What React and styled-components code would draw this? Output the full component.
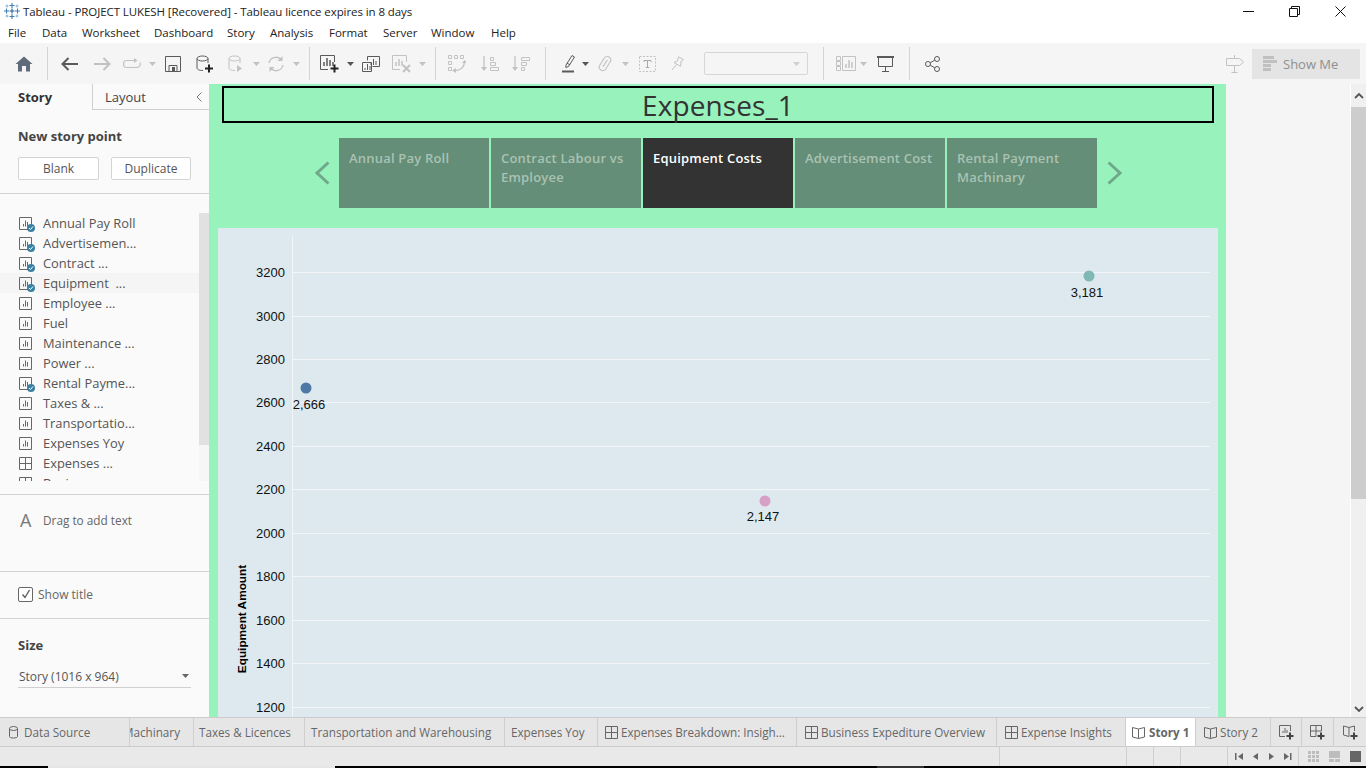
import React from "react";
import styled, { createGlobalStyle } from "styled-components";

const Global = createGlobalStyle`
  html, body { margin: 0; padding: 0; height: 100%; overflow: hidden; background: #fff; }
  #root { height: 100%; }
  * { box-sizing: border-box; }
`;
const UI = `"Open Sans", "Noto Sans", sans-serif`;

const Shell = styled.div`
  width: 1366px; height: 768px; display: flex; flex-direction: column; overflow: hidden;
  font-family: ${UI}; color: #555;
`;
const TitleBar = styled.div`
  height: 22px; flex: none; display: flex; align-items: center; padding-left: 3px; background: #fff;
`;
const WindowTitle = styled.span`
  margin-left: 2px; font-size: 11.5px; color: #222; white-space: nowrap; letter-spacing: -0.08px;
`;
const WinControls = styled.div`
  margin-left: auto; display: flex; align-items: center; padding-right: 3px;
`;
const WinBtn = styled.div`
  width: 46px; height: 22px; display: flex; align-items: center; justify-content: center;
`;
const MenuBar = styled.div`
  height: 21px; flex: none; display: flex; align-items: center; padding-left: 8px; background: #fff;
`;
const MenuItem = styled.span`
  width: ${p => p.$w}px; font-size: 11.5px; color: #222; white-space: nowrap;
`;
const Toolbar = styled.div`
  height: 41px; flex: none; display: flex; align-items: center; padding-left: 8px; padding-right: 6px;
  background: #f5f5f5;
`;
const Slot = styled.div`
  width: ${p => p.$w}px; flex: none; height: 30px; display: flex; align-items: center; justify-content: center;
`;
const Sep = styled.div`
  width: ${p => p.$w}px; flex: none; height: 33px; display: flex; justify-content: center;
  &::before { content: ""; width: 1px; height: 100%; background: #d4d4d4; }
`;
const Combo = styled.div`
  width: 104px; height: 23px; margin-left: 11px; flex: none; border: 1px solid #d6d6d6; border-radius: 2px;
  display: flex; align-items: center; justify-content: flex-end; padding-right: 3px;
`;
const RightTools = styled.div`
  margin-left: auto; display: flex; align-items: center; gap: 3px;
`;
const ShowMe = styled.div`
  width: 108px; height: 30px; background: #e4e4e4; display: flex; align-items: center; gap: 6px; padding-left: 11px;
  font-size: 13px; color: #8f8f8f;
`;
const Main = styled.div`
  height: 633px; flex: none; display: flex; min-height: 0;
`;
const Sidebar = styled.aside`
  width: 209px; flex: none; display: flex; flex-direction: column; background: #fafafa;
`;
const SideTabs = styled.div`
  height: 26px; flex: none; display: flex;
`;
const SideTabActive = styled.div`
  width: 92px; padding-left: 18px; font-size: 13px; font-weight: 700; color: #333; line-height: 26px;
`;
const SideTab = styled.div`
  flex: 1; display: flex; align-items: center; justify-content: space-between; padding: 0 7px 0 12px;
  font-size: 13px; color: #444; border-left: 1px solid #cfcfcf; border-bottom: 1px solid #cfcfcf;
`;
const NewPoint = styled.section`
  height: 84px; flex: none; padding: 17px 18px 0; border-bottom: 1px solid #d2d2d2;
`;
const SectionLabel = styled.div`
  font-size: 13px; font-weight: 700; color: #444; line-height: 18px;
`;
const BtnRow = styled.div`
  display: flex; gap: 12px; margin-top: 12px;
`;
const Btn = styled.div`
  width: ${p => p.$w}px; height: 23px; border: 1px solid #d4d4d4; border-radius: 2px; background: #fff;
  display: flex; align-items: center; justify-content: center; font-size: 12px; color: #555;
`;
const ListSection = styled.section`
  height: 301px; flex: none; padding: 19px 0 13px; border-bottom: 1px solid #d2d2d2;
`;
const ListWrap = styled.div`
  height: 268px; display: flex; overflow: hidden;
`;
const List = styled.div`
  flex: 1; min-width: 0;
`;
const Row = styled.div`
  height: 20px; display: flex; align-items: center; padding-left: 19px; gap: 11px; font-size: 12.9px; color: #555;
  white-space: pre; background: ${p => (p.$active ? "#f5f5f5" : "transparent")};
`;
const ListScroll = styled.div`
  width: 10px; flex: none; background: #f6f6f6; display: flex; flex-direction: column;
  &::before { content: ""; height: 232px; background: #e1e1e1; }
`;
const TextSection = styled.section`
  height: 77px; flex: none; padding: 15px 0 0 20px; display: flex; align-items: flex-start; gap: 12px;
  border-bottom: 1px solid #d2d2d2;
`;
const BigA = styled.span`
  font-size: 18px; line-height: 20px; color: #777; width: 11px;
`;
const Hint = styled.span`
  font-size: 11.8px; line-height: 20px; color: #666;
`;
const TitleSection = styled.section`
  height: 47px; flex: none; padding: 0 0 2px 18px; display: flex; align-items: center; gap: 5px;
  border-bottom: 1px solid #d2d2d2; font-size: 12px; color: #666;
`;
const CheckBox = styled.div`
  width: 15px; height: 15px; border: 1px solid #666; border-radius: 2px; background: #fff;
  display: flex; align-items: center; justify-content: center;
`;
const SizeSection = styled.section`
  flex: 1; padding: 17px 18px 0;
`;
const SizeSelect = styled.div`
  margin-top: 11px; height: 23px; border-bottom: 1px solid #cfcfcf; padding: 0 2px 0 1px;
  display: flex; align-items: center; justify-content: space-between; font-size: 12px; color: #555;
`;
const Canvas = styled.main`
  width: 1017px; flex: none; background: #98f2bc; padding-top: 2px; display: flex; flex-direction: column; min-height: 0;
`;
const StoryTitle = styled.h1`
  margin: 0 12px 0 13px; height: 37px; flex: none; border: 2px solid #000;
  display: flex; align-items: center; justify-content: center;
  font-family: ${UI}; font-weight: 400; font-size: 28px; color: #333; letter-spacing: 0.1px;
`;
const StoryNav = styled.nav`
  margin: 15px 0 0 95px; height: 70px; flex: none; display: flex;
`;
const Chevron = styled.div`
  width: 35px; flex: none; display: flex; align-items: center; justify-content: center;
`;
const Points = styled.div`
  display: flex; gap: 2px;
`;
const Point = styled.div`
  width: 150px; padding: 11px 10px; font-size: 13px; line-height: 19px; font-weight: 600; letter-spacing: 0.2px;
  background: ${p => (p.$active ? "#333333" : "#648e77")};
  color: ${p => (p.$active ? "#ffffff" : "#a9c2b3")};
`;
const ChartPanel = styled.div`
  margin: 20px 0 0 9px; width: 1000px; flex: 1; min-height: 0; background: #dde9ef; overflow: hidden;
`;
const ChartSvg = styled.svg`
  display: block; width: 1000px; height: 489px;
`;
const Gutter = styled.div`
  flex: 1; background: #f5f5f5;
`;
const VScroll = styled.div`
  width: 16px; flex: none; background: #f0f0f0; display: flex; flex-direction: column; align-items: center;
  border-left: 1px solid #fff;
`;
const ScrollEnd = styled.div`
  height: ${p => p.$h}px; width: 100%; flex: none; display: flex; align-items: center; justify-content: center;
`;
const Thumb = styled.div`
  width: 100%; height: 392px; flex: none; background: #cdcdcd;
`;
const ScrollSpace = styled.div`
  flex: 1;
`;
const TabBar = styled.div`
  height: 30px; flex: none; display: flex; background: #e6e6e6;
  border-top: 1px solid #cccccc; border-bottom: 1px solid #cccccc;
`;
const Tab = styled.div`
  width: ${p => p.$w}px; flex: none; overflow: hidden; display: flex; align-items: center;
  justify-content: ${p => (p.$end ? "flex-end" : "flex-start")};
  gap: ${p => p.$gap || 3}px; padding: ${p => (p.$end ? "0 13px 0 0" : `0 0 0 ${p.$pl}px`)};
  border-right: 1px solid #cfcfcf; white-space: nowrap; font-size: 11.7px; color: #666;
  background: ${p => (p.$active ? "#fff" : "transparent")};
  font-weight: ${p => (p.$active ? 700 : 400)};
`;
const AddTab = styled.div`
  width: ${p => p.$w}px; flex: none; display: flex; align-items: center; justify-content: center;
  border-right: 1px solid #cfcfcf;
`;
const StatusBar = styled.div`
  height: 19px; flex: none; display: flex; background: #e9e9e9;
`;
const StatusCell = styled.div`
  width: ${p => p.$w}px; flex: none; height: 100%; border-right: 1px solid #cfcfcf;
  display: flex; align-items: center; justify-content: space-around; padding: 0 ${p => p.$pad || 0}px;
`;
const StatusViews = styled.div`
  flex: 1; display: flex; align-items: center; padding-left: 9px; gap: 10px;
`;
const TaskStrip = styled.div`
  height: 2px; flex: none; display: flex; background: #000;
`;
const StripPart = styled.div`
  width: ${p => p.$w}px; flex: none; background: ${p => p.$c};
`;

const on = "#5a5a5a", off = "#c2c2c2";
const S = ({ w = 20, h = 20, children, vb }) => (
  <svg width={w} height={h} viewBox={vb || `0 0 ${w} ${h}`} fill="none" style={{ flex: "none", display: "block" }}>{children}</svg>
);

const Logo = () => (
  <S w={18} h={18}>
    <g stroke="#3f7fb5" strokeWidth="1.1">
      <path d="M9 1v5M6.5 3.5h5M9 12v5M6.5 14.5h5M1 9h5M3.5 6.5v5M12 9h5M14.5 6.5v5" />
      <path d="M9 6.5v5M6.5 9h5" stroke="#1f5d96" />
      <path d="M4 2.5v3M2.5 4h3M14 2.5v3M12.5 4h3M4 12.5v3M2.5 14h3M14 12.5v3M12.5 14h3" stroke="#8cb2d2" />
    </g>
  </S>
);
const Home = () => (
  <S w={18} h={16}><path d="M9 .5 17.5 8H15v7.5h-4V10H7v5.5H3V8H.5z" fill="#5f6b78" /></S>
);
const Arrow = ({ c, flip }) => (
  <S w={18} h={14}>
    <g transform={flip ? "translate(18 0) scale(-1 1)" : undefined} stroke={c} strokeWidth="2" >
      <path d="M1.5 7H17M7.5 1 1.5 7l6 6" />
    </g>
  </S>
);
const Redo = () => (
  <S w={20} h={12}><path d="M13 2.5H5a3.5 3.5 0 0 0 0 7h10a3.5 3.5 0 0 0 3-5" stroke={off} strokeWidth="1.2" /><path d="M12 0l3.5 2.5L12 5z" fill={off} /></S>
);
const Drop = ({ c = off }) => <S w={7} h={4}><path d="M0 0h7L3.5 4z" fill={c} /></S>;
const Save = () => (
  <S w={16} h={16}><path d="M.5.5h15v15H.5z" stroke={on} /><path d="M4 15V9.5h8V15" stroke={on} /><path d="M7 11h3v4H7z" fill={on} /></S>
);
const Plus = ({ x, y, c = "#222", s = 4 }) => (
  <path d={`M${x - s} ${y}h${s * 2}M${x} ${y - s}v${s * 2}`} stroke={c} strokeWidth="2" />
);
const Cyl = ({ c, children }) => (
  <S w={18} h={18}>
    <ellipse cx="6.5" cy="3.5" rx="5.5" ry="2.5" stroke={c} />
    <path d="M1 3.5V13c0 1.5 2.5 2.5 6 2.5M12 3.5V8" stroke={c} />
    {children}
  </S>
);
const Reload = () => (
  <S w={18} h={18}>
    <path d="M2 8a7 7 0 0 1 12-3.5M16 10a7 7 0 0 1-12 3.5" stroke={off} strokeWidth="1.3" />
    <path d="M15.5 1v5h-5zM2.500 17v-5h5z" fill={off} />
  </S>
);
const Bars = ({ c, x = 0, y = 0 }) => (
  <path d={`M${x + 4} ${y + 9}V${y + 7}M${x + 6.500} ${y + 9}V${y + 3}M${x + 9} ${y + 9}V${y + 5}`} stroke={c} />
);
const NewSheet = () => (
  <S w={20} h={20}>
    <path d="M14.500 8V1.500H.5v14H8" stroke={on} />
    <path d="M4 12V8M7 12V4M10 12V6M13 12V8" stroke={on} strokeWidth="1.5" />
    <Plus x={14.500} y={14.500} />
  </S>
);
const DupSheet = () => (
  <S w={18} h={16}>
    <path d="M5.500 4.500V.5h12v10h-7" stroke={on} />
    <path d="M.5 6.500h9v9h-9z" stroke={on} fill="#f5f5f5" />
    <Bars c={on} x={5} y={0} />
    <Bars c={on} x={-1} y={5} />
  </S>
);
const ClearSheet = () => (
  <S w={20} h={18}>
    <path d="M14.500 7V.5H.5v14H8" stroke={off} />
    <path d="M4 11V7M7 11V4M10 11V6" stroke={off} strokeWidth="1.5" />
    <path d="M11 10l7 7M18 10l-7 7" stroke={off} strokeWidth="2" />
  </S>
);
const Swap = () => (
  <S w={18} h={18} >
    <g stroke={off}>
      <path d="M.5.5h3v3h-3zM6.500.5h3v3h-3zM12.500.5h3v3h-3zM.5 6.500h3v3h-3zM.5 12.500h3v3h-3z" />
      <path d="M16.500 7c0 5-4 8.500-9.500 8.500" strokeWidth="1.300" />
    </g>
    <path d="M8 13v5l-4-2.500zM14 8h5l-2.500-3z" fill={off} />
  </S>
);
const Sort = ({ desc }) => (
  <S w={18} h={16}>
    <path d="M3 0v12" stroke={off} strokeWidth="1.300" />
    <path d="M0 11h6l-3 4z" fill={off} />
    {desc
      ? <path d="M9.500 1.500h8v3h-8zM9.500 6.500h5v3h-5zM9.500 11.500h3v3h-3z" stroke={off} />
      : <path d="M9.500 1.500h3v3h-3zM9.500 6.500h5v3h-5zM9.500 11.500h8v3h-8z" stroke={off} />}
  </S>
);
const Pen = () => (
  <S w={13} h={19}>
    <path d="M4 11 10 1.500l2.500 1.500-6 9.500-2.700 1z" stroke={on} />
    <path d="M5 9l3 2" stroke={on} />
    <path d="M0 17.500h12" stroke={on} strokeWidth="2" />
  </S>
);
const Clip = () => (
  <S w={14} h={17}>
    <g transform="rotate(32 7 8.500)" stroke={off} strokeWidth="1.100">
      <rect x="3.500" y=".8" width="7" height="15.400" rx="3.500" />
      <path d="M7 4v8.500" />
    </g>
  </S>
);
const TextBox = () => (
  <S w={17} h={16}>
    <path d="M.5.5h16v15H.5z" stroke={off} strokeDasharray="2 1.500" />
    <path d="M5 4.500h7M8.500 4.500v7M6.800 11.500h3.400M5 4.500V6M12 4.500V6" stroke="#a8a8a8" />
  </S>
);
const Pin = () => (
  <S w={13} h={15} >
    <path d="M7.500.8l5 2.800-2.400 1.400-.6 5.300L3 6.500l3.500-1.500zM5.500 8.500 1 14" stroke={off} />
  </S>
);
const LabelsIcon = () => (
  <S w={20} h={15}>
    <path d="M.5.5h4v4h-4zM.5 5.500h4v4h-4zM.5 10.500h4v4h-4zM6.500.5h13v14h-13z" stroke={off} />
    <path d="M10 12V8M13 12V4M16 12V6" stroke={off} strokeWidth="1.500" />
  </S>
);
const Present = () => (
  <S w={17} h={16}>
    <path d="M0 1h17" stroke={on} strokeWidth="2" />
    <path d="M1.500 1v9.500h14V1M8.500 10.500v4.500M5 15.500h7" stroke={on} />
  </S>
);
const Share = () => (
  <S w={15} h={16}>
    <circle cx="3" cy="8" r="2.500" stroke={on} />
    <circle cx="12" cy="3" r="2.500" stroke={on} />
    <circle cx="12" cy="13" r="2.500" stroke={on} />
    <path d="M5.200 6.800 9.800 4.200M5.200 9.200l4.600 2.600" stroke={on} />
  </S>
);
const Signpost = () => (
  <S w={18} h={18}>
    <path d="M8.500 0v3M.5 3.500h13l4 3.500-4 3.500H.5zM8.500 10.500v7M5.500 17.500h6" stroke={off} />
  </S>
);
const ShowMeIcon = () => (
  <S w={14} h={15}><path d="M0 0h11v3H0zM0 4h14v3H0zM0 8h8v3H0zM0 12h8v3H0z" fill="#c0c0c0" /></S>
);
const SheetGlyph = () => (
  <S w={13} h={15} vb="0 0 13 15">
    <path d="M.5 1.500h12v12H.5z" stroke="#666" fill="none" />
    <path d="M4.500 10.500V8M6.500 10.500V4.500M8.500 10.500V6" stroke="#666" />
  </S>
);
const Badge = styled.span`
  position: absolute; right: -3px; bottom: -1px; width: 8px; height: 8px; border-radius: 50%; background: #3a80a3;
  display: flex; align-items: center; justify-content: center;
`;
const IconBox = styled.span`
  position: relative; width: 13px; height: 15px; flex: none; display: block;
`;
const Sheet = ({ check }) => (
  <IconBox>
    <SheetGlyph />
    {check && <Badge><S w={6} h={6}><path d="M1 3l1.500 1.500L5 1.500" stroke="#fff" /></S></Badge>}
  </IconBox>
);
const GridGlyph = ({ c = "#666" }) => (
  <S w={13} h={13}><path d="M.5.5h12v12H.5zM6.500.5v12M.5 6.500h12" stroke={c} /></S>
);
const Book = ({ c = "#666" }) => (
  <S w={13} h={13}>
    <path d="M.5 1.500 6.500 3l6-1.500V11l-6 1.500L.5 11zM6.500 3v9.500" stroke={c} />
  </S>
);
const TabCyl = () => (
  <S w={9} h={13}>
    <ellipse cx="4.500" cy="2.500" rx="4" ry="2" stroke="#666" />
    <path d="M.5 2.500V10.500c0 2 8 2 8 0V2.500" stroke="#666" />
  </S>
);
const AddIcon = ({ kind }) => (
  <S w={15} h={15}>
    {kind === "sheet" && <><path d="M11.500 6V.5H.5v11H6" stroke="#666" /><path d="M4 8V6M6 8V3M8 8V5" stroke="#666" /></>}
    {kind === "grid" && <path d="M11.500 6V.5H.5v11H6M6 .5v11M.5 6H11.500" stroke="#666" />}
    {kind === "story" && <path d="M.5 1 6 2.500 11.500 1v5M6 2.500V11.500L.5 10V1" stroke="#666" />}
    <Plus x={11} y={11} c="#444" s={3.500} />
  </S>
);
const Nav = ({ d }) => <S w={9} h={9}><path d={d} fill="#666" /></S>;

const Slotted = ({ w, children }) => <Slot $w={w}>{children}</Slot>;

const sheets = [
  ["Annual Pay Roll", 1], ["Advertisemen...", 1], ["Contract ...", 1], ["Equipment  ...", 1, 1], ["Employee ..."],
  ["Fuel"], ["Maintenance ..."], ["Power ..."], ["Rental Payme...", 1], ["Taxes & ..."], ["Transportatio..."],
  ["Expenses Yoy"], ["Expenses ...", 0, 0, 1], ["Business ...", 0, 0, 1],
];
const menus = [["File", 34], ["Data", 40], ["Worksheet", 72], ["Dashboard", 73], ["Story", 43], ["Analysis", 59], ["Format", 54], ["Server", 48], ["Window", 60], ["Help", 40]];
const ticks = [[3200, 49], [3000, 93], [2800, 136], [2600, 179], [2400, 223], [2200, 266], [2000, 310], [1800, 353], [1600, 397], [1400, 440], [1200, 484]];

const Chart = () => (
  <ChartSvg viewBox="0 0 1000 489">
    <path d="M74.500 8V489" stroke="#f3f6f8" />
    {ticks.map(([t, base]) => (
      <g key={t}>
        <path d={`M74 ${base - 4.500}H992`} stroke="#f3f6f8" />
        <text x="67" y={base} textAnchor="end" fontFamily="Liberation Sans" fontSize="13" fill="#111">{t}</text>
      </g>
    ))}
    <circle cx="88" cy="160" r="5.500" fill="#4e79a7" />
    <circle cx="547" cy="273" r="5.500" fill="#d7a1c5" />
    <circle cx="871" cy="48" r="5.500" fill="#7fb8b4" />
    <g fontFamily="Liberation Sans" fontSize="13" fill="#111" textAnchor="middle">
      <text x="91" y="181">2,666</text>
      <text x="545" y="293">2,147</text>
      <text x="869" y="69">3,181</text>
    </g>
    <text transform="translate(27.500 391) rotate(-90)" textAnchor="middle" fontFamily="Liberation Sans" fontWeight="700" fontSize="11.800" fill="#000">Equipment Amount</text>
  </ChartSvg>
);

export default function App() {
  return (
    <Shell>
      <Global />
      <TitleBar>
        <Logo />
        <WindowTitle>Tableau - PROJECT LUKESH [Recovered] - Tableau licence expires in 8 days</WindowTitle>
        <WinControls>
          <WinBtn><S w={11} h={11}><path d="M0 5.500h11" stroke="#111" /></S></WinBtn>
          <WinBtn><S w={11} h={11}><path d="M.5 2.500h8v8h-8zM2.500 2.500V.5h8v8h-2" stroke="#111" /></S></WinBtn>
          <WinBtn><S w={11} h={11}><path d="M.5.5l10 10M10.500.5l-10 10" stroke="#111" /></S></WinBtn>
        </WinControls>
      </TitleBar>
      <MenuBar>
        {menus.map(([m, w]) => <MenuItem key={m} $w={w}>{m}</MenuItem>)}
      </MenuBar>
      <Toolbar>
        <Slotted w={32}><Home /></Slotted>
        <Sep $w={15} />
        <Slotted w={30}><Arrow c="#5a5a5a" /></Slotted>
        <Slotted w={34}><Arrow c={off} flip /></Slotted>
        <Slotted w={26}><Redo /></Slotted>
        <Slotted w={14}><Drop /></Slotted>
        <Slotted w={28}><Save /></Slotted>
        <Slotted w={36}><Cyl c={on}><Plus x={13} y={13.500} /></Cyl></Slotted>
        <Slotted w={28}><Cyl c={off}><path d="M9 10v7l5-3.500z" fill={off} /></Cyl></Slotted>
        <Slotted w={10}><Drop /></Slotted>
        <Slotted w={30}><Reload /></Slotted>
        <Slotted w={10}><Drop /></Slotted>
        <Sep $w={16} />
        <Slotted w={26}><NewSheet /></Slotted>
        <Slotted w={14}><Drop c="#555" /></Slotted>
        <Slotted w={28}><DupSheet /></Slotted>
        <Slotted w={34}><ClearSheet /></Slotted>
        <Slotted w={6}><Drop /></Slotted>
        <Sep $w={20} />
        <Slotted w={24}><Swap /></Slotted>
        <Slotted w={42}><Sort /></Slotted>
        <Slotted w={20}><Sort desc /></Slotted>
        <Sep $w={28} />
        <Slotted w={18}><Pen /></Slotted>
        <Slotted w={16}><Drop c="#555" /></Slotted>
        <Slotted w={24}><Clip /></Slotted>
        <Slotted w={16}><Drop /></Slotted>
        <Slotted w={28}><TextBox /></Slotted>
        <Slotted w={32}><Pin /></Slotted>
        <Combo><Slot $w={16}><Drop c="#cfcfcf" /></Slot></Combo>
        <Sep $w={30} />
        <Slotted w={16}><LabelsIcon /></Slotted>
        <Slotted w={18}><Drop /></Slotted>
        <Slotted w={26}><Present /></Slotted>
        <Sep $w={22} />
        <Slotted w={24}><Share /></Slotted>
        <RightTools>
          <Slotted w={28}><Signpost /></Slotted>
          <ShowMe><ShowMeIcon />Show Me</ShowMe>
        </RightTools>
      </Toolbar>
      <Main>
        <Sidebar>
          <SideTabs>
            <SideTabActive>Story</SideTabActive>
            <SideTab>Layout<S w={6} h={10}><path d="M5.500.5 1 5l4.500 4.500" stroke="#777" /></S></SideTab>
          </SideTabs>
          <NewPoint>
            <SectionLabel>New story point</SectionLabel>
            <BtnRow>
              <Btn $w={81}>Blank</Btn>
              <Btn $w={80}>Duplicate</Btn>
            </BtnRow>
          </NewPoint>
          <ListSection>
            <ListWrap>
              <List>
                {sheets.map(([name, check, active, grid]) => (
                  <Row key={name} $active={!!active}>
                    {grid ? <GridGlyph /> : <Sheet check={!!check} />}
                    {name}
                  </Row>
                ))}
              </List>
              <ListScroll />
            </ListWrap>
          </ListSection>
          <TextSection><BigA>A</BigA><Hint>Drag to add text</Hint></TextSection>
          <TitleSection>
            <CheckBox><S w={10} h={10}><path d="M1.500 5.500 4 8.500 8.500 1" stroke="#555" strokeWidth="1.300" /></S></CheckBox>
            Show title
          </TitleSection>
          <SizeSection>
            <SectionLabel>Size</SectionLabel>
            <SizeSelect>Story (1016 x 964)<Drop c="#666" /></SizeSelect>
          </SizeSection>
        </Sidebar>
        <Canvas>
          <StoryTitle>Expenses_1</StoryTitle>
          <StoryNav>
            <Chevron><S w={16} h={24}><path d="M14.500 1.500 3 12l11.500 10.500" stroke="#6fa98a" strokeWidth="3" /></S></Chevron>
            <Points>
              <Point>Annual Pay Roll</Point>
              <Point>Contract Labour vs Employee</Point>
              <Point $active>Equipment Costs</Point>
              <Point>Advertisement Cost</Point>
              <Point>Rental Payment Machinary</Point>
            </Points>
            <Chevron><S w={16} h={24}><path d="M1.500 1.500 13 12 1.500 22.500" stroke="#6fa98a" strokeWidth="3" /></S></Chevron>
          </StoryNav>
          <ChartPanel><Chart /></ChartPanel>
        </Canvas>
        <Gutter />
        <VScroll>
          <ScrollEnd $h={23}><S w={10} h={6}><path d="M1 5l4-4 4 4" stroke="#555" strokeWidth="1.800" /></S></ScrollEnd>
          <Thumb />
          <ScrollSpace />
          <ScrollEnd $h={16}><S w={10} h={6}><path d="M1 1l4 4 4-4" stroke="#555" strokeWidth="1.800" /></S></ScrollEnd>
        </VScroll>
      </Main>
      <TabBar>
        <Tab $w={130} $pl={9} $gap={6}><TabCyl />Data Source</Tab>
        <Tab $w={64} $end>Machinary</Tab>
        <Tab $w={111} $pl={5}>Taxes &amp; Licences</Tab>
        <Tab $w={200} $pl={6}>Transportation and Warehousing</Tab>
        <Tab $w={93} $pl={6}>Expenses Yoy</Tab>
        <Tab $w={199} $pl={7}><GridGlyph />Expenses Breakdown: Insigh...</Tab>
        <Tab $w={200} $pl={8}><GridGlyph />Business Expediture Overview</Tab>
        <Tab $w={129} $pl={8}><GridGlyph />Expense Insights</Tab>
        <Tab $w={70} $pl={6} $gap={4} $active><Book />Story 1</Tab>
        <Tab $w={75} $pl={8}><Book />Story 2</Tab>
        <AddTab $w={31}><AddIcon kind="sheet" /></AddTab>
        <AddTab $w={32}><AddIcon kind="grid" /></AddTab>
        <AddTab $w={33}><AddIcon kind="story" /></AddTab>
      </TabBar>
      <StatusBar>
        <StatusCell $w={1000} />
        <StatusCell $w={127} />
        <StatusCell $w={27} />
        <StatusCell $w={27} />
        <StatusCell $w={47} />
        <StatusCell $w={71} $pad={3}>
          <Nav d="M0 1h1.500v7H0zM8 1v7L3 4.500z" />
          <Nav d="M7 1v7L2 4.500z" />
          <Nav d="M2 1v7l5-3.500z" />
          <Nav d="M1 1v7l5-3.500zM7 1h1.500v7H7z" />
        </StatusCell>
        <StatusViews>
          <S w={11} h={11}><path d="M0 0h3v3H0zM4 0h3v3H4zM8 0h3v3H8zM0 4h3v3H0zM4 4h3v3H4zM8 4h3v3H8zM0 8h3v3H0zM4 8h3v3H4zM8 8h3v3H8z" fill="#bdbdbd" /></S>
          <S w={11} h={11}><path d="M0 0h11v7H0zM0 8h5v3H0zM6 8h5v3H6z" fill="#bdbdbd" /></S>
          <S w={11} h={11}><path d="M0 0h11v11H0z" fill="#666" /></S>
        </StatusViews>
      </StatusBar>
      <TaskStrip>
        <StripPart $w={48} $c="#000" />
        <StripPart $w={287} $c="#e6e6e6" />
        <StripPart $w={542} $c="#000" />
        <StripPart $w={47} $c="#333" />
      </TaskStrip>
    </Shell>
  );
}
